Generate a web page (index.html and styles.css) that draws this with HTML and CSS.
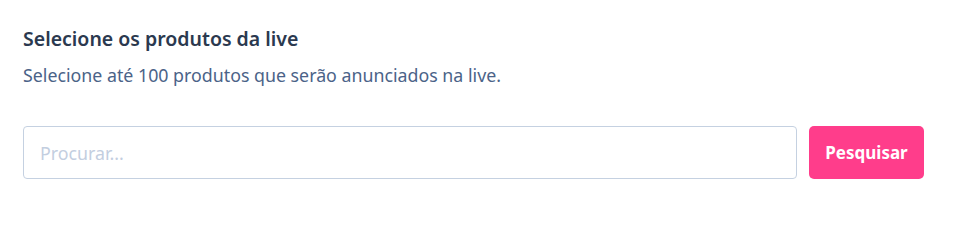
FILE: index.html
```html
<!DOCTYPE html>
<html lang="pt-BR">
<head>
<meta charset="utf-8">
<link rel="stylesheet" href="styles.css">
</head>
<body>
<section class="panel">
  <h2 class="title">Selecione os produtos da live</h2>
  <p class="subtitle">Selecione até 100 produtos que serão anunciados na live.</p>
  <form class="search">
    <input class="search-input" type="text" placeholder="Procurar...">
    <button class="search-btn" type="button">Pesquisar</button>
  </form>
</section>
</body>
</html>
```
FILE: styles.css
```css
html, body {
  margin: 0;
  padding: 0;
  background: #ffffff;
}
body {
  font-family: "Noto Sans", "Open Sans", sans-serif;
}
.panel {
  padding: 26px 31px 0 23px;
}
.title {
  margin: 0;
  font-size: 19.5px;
  line-height: 26px;
  font-weight: 600;
  color: #2b394f;
}
.subtitle {
  margin: 11px 0 0;
  font-size: 17.8px;
  line-height: 24px;
  color: #4b6388;
}
.search {
  display: flex;
  gap: 12px;
  margin-top: 39px;
}
.search-input {
  flex: 1;
  height: 53px;
  box-sizing: border-box;
  border: 1px solid #c5d1e1;
  border-radius: 4px;
  padding: 0 16px;
  font-family: inherit;
  font-size: 17.8px;
  color: #2b394f;
  outline: none;
}
.search-input::placeholder {
  color: #c3cedf;
}
.search-btn {
  width: 115px;
  height: 53px;
  border: none;
  border-radius: 5px;
  background: #ff3d8b;
  color: #ffffff;
  font-family: inherit;
  font-size: 17px;
  font-weight: 700;
  cursor: pointer;
}
```
